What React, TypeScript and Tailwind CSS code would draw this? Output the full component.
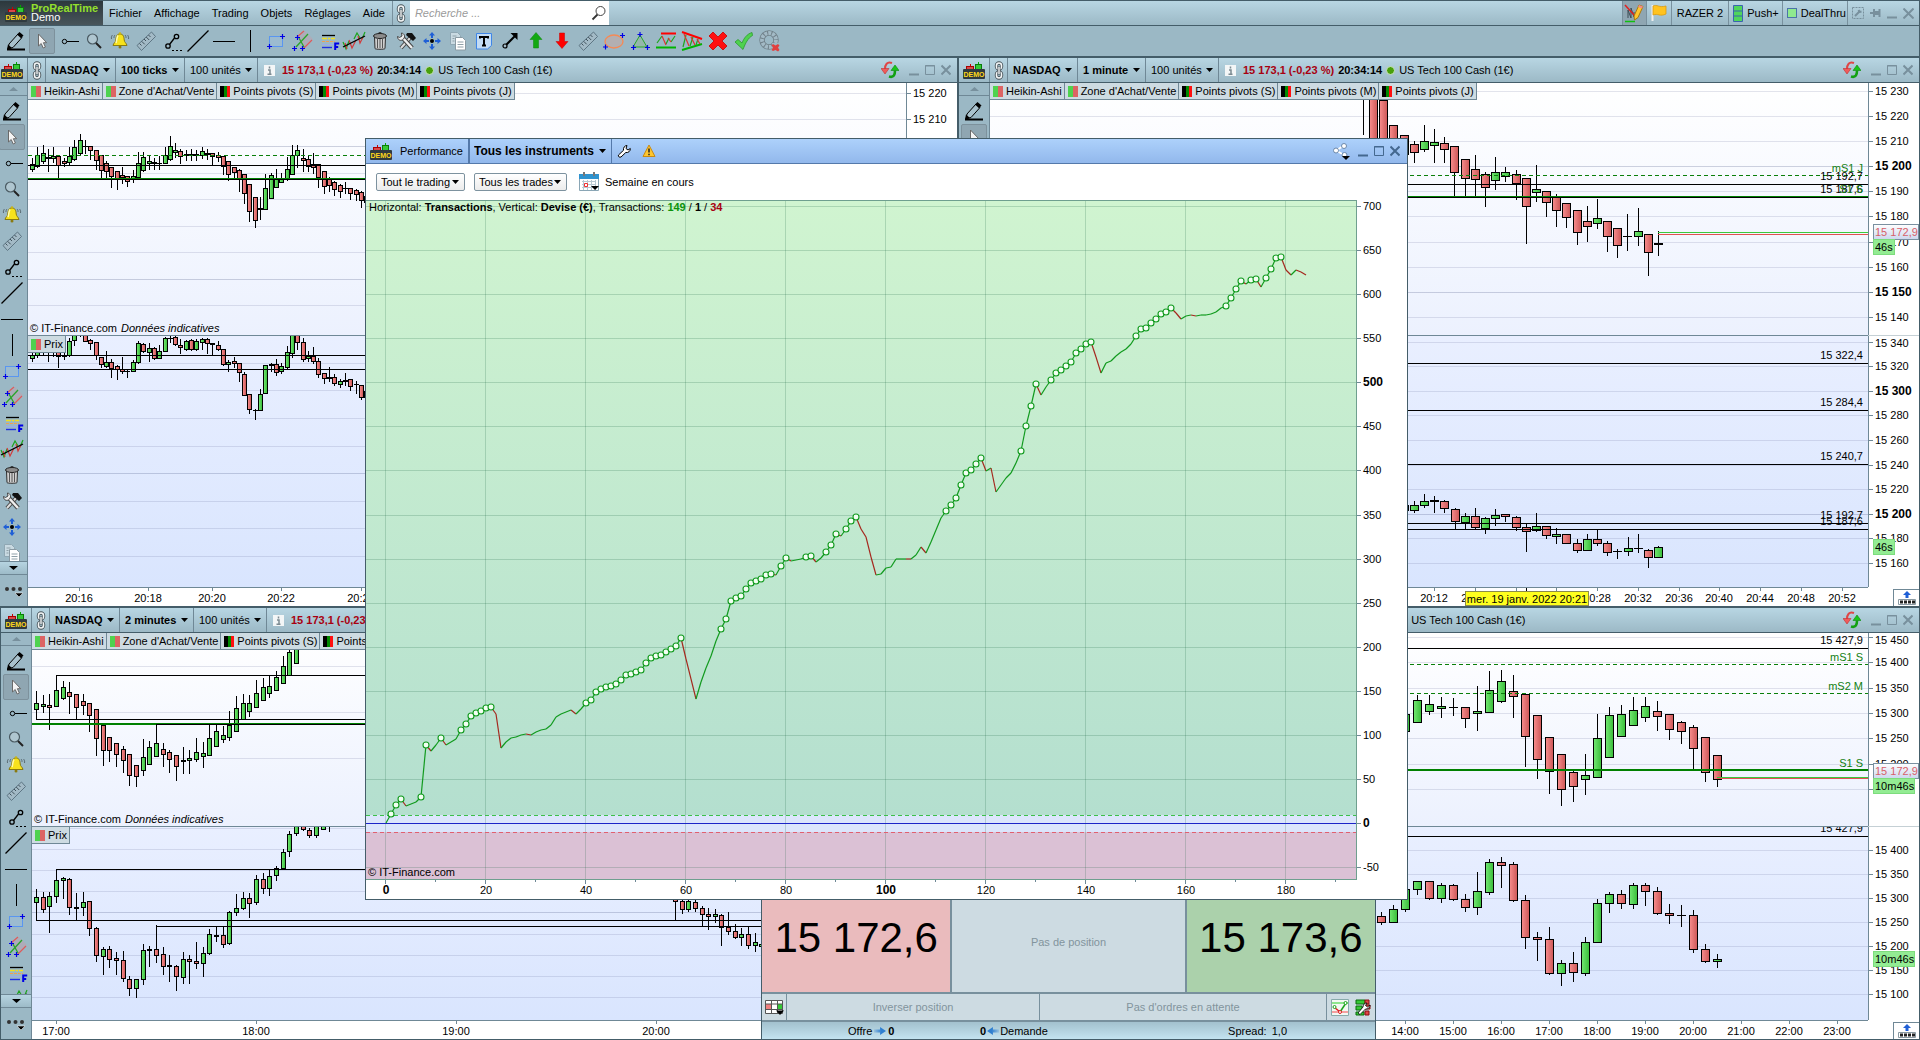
import React from "react";

/* ------------------------------------------------------------------ */
/* Icons                                                               */
/* ------------------------------------------------------------------ */

type IconName =
  | "pencil" | "cursor" | "ray" | "search" | "bell" | "ruler" | "segment" | "diagonal" | "hline" | "vline"
  | "rect" | "channel" | "fibo" | "regression" | "trash" | "tools" | "move" | "copy" | "text" | "arrow"
  | "up" | "down" | "ellipse" | "triangle" | "zigzag" | "wedge" | "cross" | "check" | "donut";

const plus = (x: number, y: number) => <path d={`M${x - 2.5} ${y}h5M${x} ${y - 2.5}v5`} stroke="#0000e6" strokeWidth="1.2" />;

const shapes: Record<IconName, React.ReactNode> = {
  pencil: (
    <>
      <path d="M6 16 15 6l4 3.500-9 10-5 1.500z" fill="#a9c2cd" stroke="#000" strokeWidth="1" />
      <path d="M14 6.500 16.500 4l4 3.500-2.500 2.800z" fill="#000" />
      <path d="M5 16.500 9 20l-5 1.500z" fill="#000" />
      <path d="M4 21.500h18" stroke="#000" strokeWidth="2" />
    </>
  ),
  cursor: <path d="M9.500 6v12l2.700-2.500 2 4.500 2.200-1-2-4.300h3.300z" fill="#f4f4f4" stroke="#6a6a6a" strokeWidth="1" />,
  ray: (
    <>
      <path d="M12 13.500h12" stroke="#000" strokeWidth="1" />
      <circle cx="9.500" cy="13.500" r="2.200" fill="none" stroke="#000" />
    </>
  ),
  search: (
    <>
      <circle cx="11.500" cy="11" r="5" fill="#c3d3db" fillOpacity=".5" stroke="#4a5a62" strokeWidth="1.200" />
      <path d="m15 15 5 5" stroke="#222" strokeWidth="2" />
    </>
  ),
  bell: (
    <>
      <path d="M13 6c-3.500 0-4 3-4.200 6-.2 2.500-2.300 3-2.800 5.500h14c-.5-2.500-2.600-3-2.800-5.500C17 9 16.500 6 13 6z" fill="#f7e21c" stroke="#8a7a10" strokeWidth="1" />
      <path d="M11 7.500c-1.500 2-1 5-2 7.500" stroke="#fffbb0" strokeWidth="1.500" fill="none" />
      <circle cx="13" cy="19" r="1.500" fill="#8a7a10" />
      <circle cx="13" cy="5.500" r="1.200" fill="#c9b414" />
      <path d="M5.500 7c-1 1-1.300 2.500-1 4M8 7c-1 1-1 2-1 3M20.500 7c1 1 1.300 2.500 1 4M18 7c1 1 1 2 1 3" stroke="#5a6a72" strokeWidth="1" fill="none" />
    </>
  ),
  ruler: (
    <>
      <path d="M4 17.500 18.500 4 22.500 8.500 8.500 22.500z" fill="#a3bac6" stroke="#5e7684" strokeWidth="1" />
      <path d="m6.500 15.500 2 2M8.700 13.300l3 3M11 11l2 2M13.200 9l3 3M15.500 7l2 2" stroke="#40525c" strokeWidth="1" />
    </>
  ),
  segment: (
    <>
      <path d="m10.500 16.500 5-6.500" stroke="#000" strokeWidth="1.300" />
      <circle cx="9" cy="18" r="2.200" fill="none" stroke="#000" strokeWidth="1.300" />
      <circle cx="17.500" cy="8.500" r="2.200" fill="none" stroke="#000" strokeWidth="1.300" />
      <path d="M13 22.500h2M17 22.500h2M21 22.500h2" stroke="#000" />
    </>
  ),
  diagonal: <path d="M2.500 23.500 23.500 2.500" stroke="#000" strokeWidth="1.200" />,
  hline: <path d="M2 13.500h22" stroke="#000" strokeWidth="1" />,
  vline: <path d="M13.500 2v22" stroke="#000" strokeWidth="1" />,
  rect: (
    <>
      <rect x="6.500" y="8.500" width="13" height="10" fill="#9fbfe6" fillOpacity=".35" stroke="#5a96f0" />
      {plus(6.5, 18.5)}
      {plus(19.5, 8.5)}
    </>
  ),
  channel: (
    <>
      <path d="M8 10 16 3l8 8-9 8z" fill="#c79aa8" fillOpacity=".4" />
      <path d="M8 9 15 3M14 21l9-9" stroke="#e05a5a" strokeWidth="1.200" />
      <path d="m7 19 12-13M10 10l5 9" stroke="#2aa52a" strokeWidth="1.300" />
      {plus(8.5, 9.5)}
      {plus(5.5, 20.5)}
      {plus(13.5, 20.5)}
    </>
  ),
  fibo: (
    <>
      <path d="M7 7.500h13" stroke="#000" strokeWidth="1.300" />
      <path d="M7 10.500h13" stroke="#f0e020" strokeWidth="1.500" strokeDasharray="5 1 2 1" />
      <path d="M7 13.500h13" stroke="#f0a050" strokeDasharray="3 1" />
      <path d="M7 16.500h11" stroke="#9aa8f0" />
      <path d="M7 19.500h10" stroke="#2030e0" strokeWidth="1.400" />
      <path d="M20.200 22v-6.500h4M20.200 19h3" stroke="#0000e6" strokeWidth="2" fill="none" />
    </>
  ),
  regression: (
    <>
      <path d="m2 14 3 7 3-8M13 11l3-6 3 5M21 11l3-7" stroke="#1da51d" strokeWidth="1.200" fill="none" />
      <path d="m4 15 2 6M8 12l3 8 4-8M17 8l2 7 3-6" stroke="#d23a3a" strokeWidth="1.200" fill="none" />
      <path d="M2 19 24 8" stroke="#000" strokeWidth="1.300" />
    </>
  ),
  trash: (
    <>
      <path d="M7.500 9h11l-.5 11.500c0 1-10 1-10 0z" fill="#cfcfcf" stroke="#2d2d2d" />
      <path d="M10.500 11v9M13 11v9M15.500 11v9" stroke="#555" />
      <ellipse cx="13" cy="8" rx="6.500" ry="2.500" fill="#8c8c8c" stroke="#222" />
      <path d="M11 6c0-2 4-2 4 0" stroke="#222" fill="none" />
    </>
  ),
  tools: (
    <>
      <path d="m8 20 9-10" stroke="#444" strokeWidth="4" />
      <path d="m8 20 9-10" stroke="#ddd" strokeWidth="2" />
      <path d="m14 5 5 0 4 5-3 3-7-6z" fill="#111" />
      <path d="m9 9 10 11" stroke="#444" strokeWidth="4.500" />
      <path d="m9 9 10 11" stroke="#eee" strokeWidth="2.500" />
      <path d="M4.500 8.500c0 4 4 5 6 2.500s1-5.500-2-6l.5 3-2.500 1.500z" fill="#eee" stroke="#444" />
    </>
  ),
  move: (
    <>
      <circle cx="13" cy="13" r="2" fill="#000" />
      <path d="m13 4 3 3.500h-2V10h-2V7.500h-2zM13 22l3-3.500h-2V16h-2v2.500h-2zM4 13l3.500-3v2H10v2H7.500v2zM22 13l-3.500-3v2H16v2h2.500v2z" fill="#1f5fd6" />
    </>
  ),
  copy: (
    <>
      <path d="M5.500 4.500h7l3 3v9h-10z" fill="#c9dae2" stroke="#8fa7b3" />
      <path d="M10.500 9.500h7l3 3v9.500h-10z" fill="#fff" stroke="#8a9aa3" />
      <path d="M12.500 14h6M12.500 16.500h6M12.500 19h6M7.500 8h4M7.500 10.500h2M7.500 13h2" stroke="#8fa0a8" />
    </>
  ),
  text: (
    <>
      <path d="M5.500 5.500h15v12l-4 3.500h-11z" fill="#c3dcf5" stroke="#3f86e8" />
      <path d="M9 10.500V9h8v1.500M13 9v8.500M11 17.500h4" stroke="#000" strokeWidth="2" fill="none" />
    </>
  ),
  arrow: (
    <>
      <path d="m8 18 10-10" stroke="#000" strokeWidth="2" />
      <path d="M20.500 5v7l-7-7z" fill="#000" />
      <circle cx="8" cy="18" r="2" fill="#a3bac6" stroke="#000" strokeWidth="1.200" />
    </>
  ),
  up: <path d="m13 4.500 6 7h-3.500V20h-5v-8.500H7z" fill="#13a813" stroke="#0a8a0a" strokeWidth=".5" />,
  down: <path d="m13 20.500 6-7h-3.500V5h-5v8.500H7z" fill="#f00" stroke="#c40000" strokeWidth=".5" />,
  ellipse: (
    <>
      <ellipse cx="13" cy="13.500" rx="9" ry="6.500" fill="#c3a9a4" fillOpacity=".6" stroke="#f58a55" strokeWidth="1.300" />
      {plus(4.5, 19)}
      {plus(21.5, 7.5)}
    </>
  ),
  triangle: (
    <>
      <path d="m13 7 7 12H6z" fill="#8fb89a" fillOpacity=".6" stroke="#2aa52a" />
      {plus(13, 6.5)}
      {plus(6.5, 19.5)}
      {plus(20.5, 19.5)}
    </>
  ),
  zigzag: (
    <>
      <path d="M8 5.500h15" stroke="#f00" strokeWidth="2" />
      <path d="M3 19.500h20" stroke="#00b400" strokeWidth="2" />
      <path d="m4 15 5-7M13 16l3-6M18 14l4-6" stroke="#1da51d" strokeWidth="1.200" fill="none" />
      <path d="m9 8 4 9M15 10l3 4" stroke="#e03030" strokeWidth="1.200" fill="none" />
    </>
  ),
  wedge: (
    <>
      <path d="m3 4 20 7" stroke="#f00" strokeWidth="2" />
      <path d="M3 22 23 16" stroke="#00b400" strokeWidth="2" />
      <path d="m4 19 3-12M11 18l3-9M17 17l2-6" stroke="#1da51d" strokeWidth="1.200" fill="none" />
      <path d="m5 6 5 12M12 9l4 8M18 11l3 5" stroke="#e03030" strokeWidth="1.200" fill="none" />
    </>
  ),
  cross: <path d="m8 4 5 5 5-5 4 4-5 5 5 5-4 4-5-5-5 5-4-4 5-5-5-5z" fill="#ff1010" stroke="#c00" strokeWidth=".8" />,
  check: <path d="m4 14 3-2.500 4 3.500c2-5 5-9 10-10.500l.5 3C17 10 14.500 15 12 21.500z" fill="#4fd24f" stroke="#2c9a2c" strokeWidth=".8" />,
  donut: (
    <>
      <circle cx="12" cy="12" r="7" fill="none" stroke="#71828b" strokeWidth="5.500" />
      <circle cx="12" cy="12" r="7" fill="none" stroke="#a3bac6" strokeWidth="3.800" strokeDasharray="3 1" />
      <path d="M15 15h9v9h-9z" fill="#9bb8c5" />
      <path d="m16 16 2.500 1.500L21 16l1.500 1.500L21 19.500l1.500 2.500-1.500 1.500-2.500-1.500L16 23l-1.500-1 1.500-2.500-1.500-2z" fill="#e04040" />
    </>
  ),
};

function Icon({ name }: { name: IconName }) {
  return (
    <svg className="block size-[26px]" viewBox="0 0 26 26" fill="none" aria-hidden="true">
      {shapes[name]}
    </svg>
  );
}

function DemoLogo() {
  return (
    <svg className="block h-[17px] w-[22px] shrink-0" viewBox="0 0 22 17" aria-hidden="true">
      <path d="M7.500 2v6" stroke="#c00" />
      <rect x="3.500" y="4.500" width="7" height="3" fill="#d84a4a" stroke="#a00" />
      <path d="M15.500 0v8" stroke="#0a0" />
      <rect x="12.500" y="2.500" width="6" height="6" fill="#35c935" stroke="#0a7a0a" />
      <rect y="7" width="22" height="10" rx="1" fill="#2f3a3f" />
      <text x="11" y="15" textAnchor="middle" fontSize="7" fontWeight="700" fill="#ffd91a" fontFamily="'Liberation Sans', sans-serif">
        DEMO
      </text>
    </svg>
  );
}

function LinkIcon() {
  return (
    <svg className="block h-[19px] w-[10px]" viewBox="0 0 10 19" fill="none" aria-hidden="true">
      <rect x="2.500" y="2" width="5" height="6" rx="2.500" stroke="#4a565c" strokeWidth="3.400" />
      <rect x="2.500" y="11" width="5" height="6" rx="2.500" stroke="#4a565c" strokeWidth="3.400" />
      <rect x="2.500" y="2" width="5" height="6" rx="2.500" stroke="#f4f6f7" strokeWidth="1.600" />
      <rect x="2.500" y="11" width="5" height="6" rx="2.500" stroke="#f4f6f7" strokeWidth="1.600" />
      <path d="M5 5.500v8" stroke="#4a565c" strokeWidth="3" />
      <path d="M5 6v7" stroke="#f4f6f7" strokeWidth="1.400" />
    </svg>
  );
}

function Caret() {
  return (
    <svg className="pointer-events-none absolute top-1/2 right-[5px] h-1 w-[7px] -translate-y-1/2" viewBox="0 0 7 4" aria-hidden="true">
      <path d="M0 0h7L3.500 4z" fill="#000" />
    </svg>
  );
}

function RefreshIcon() {
  return (
    <svg className="block h-[18px] w-[18px]" viewBox="0 0 18 18" fill="none" aria-hidden="true">
      <path d="M11 2C6 0 4 4 4 8" stroke="#e04545" strokeWidth="2" />
      <path d="M0 7.500h8l-4 5.500z" fill="#f05a5a" stroke="#c23030" strokeWidth=".6" />
      <path d="M8 15.500c5 1.500 6-2 6-6" stroke="#12a012" strokeWidth="2.600" />
      <path d="M10 9.500h8L14 4z" fill="#19c419" stroke="#0c8a0c" strokeWidth=".6" />
    </svg>
  );
}

function WindowButtons({ tone }: { tone: "grey" | "blue" }) {
  const color = tone === "grey" ? "text-[#78909d]" : "text-[#44688f]";
  return (
    <div className={`flex items-center gap-[6px] ${color}`}>
      <button aria-label="Réduire" className="h-3 w-[10px]">
        <svg viewBox="0 0 10 12" className="block h-3 w-[10px]"><path d="M0 10.500h10" stroke="currentColor" strokeWidth="2" /></svg>
      </button>
      <button aria-label="Agrandir" className="h-3 w-[10px]">
        <svg viewBox="0 0 10 12" className="block h-3 w-[10px]"><path d="M.5 1.500h9v9h-9zM0 2h10" stroke="currentColor" fill="none" /></svg>
      </button>
      <button aria-label="Fermer" className="h-3 w-[10px]">
        <svg viewBox="0 0 10 12" className="block h-3 w-[10px]"><path d="m.5 1.500 9 9m0-9-9 9" stroke="currentColor" strokeWidth="2" /></svg>
      </button>
    </div>
  );
}

/* ------------------------------------------------------------------ */
/* Chart primitives                                                    */
/* ------------------------------------------------------------------ */

/** high, top of body, bottom of body, low, 1 = rising */
type Bar = [number, number, number, number, 0 | 1];
type Level = { y: number; kind?: "black" | "green" | "dash" | "thick"; from?: number; up?: number; down?: number };
type Note = { text: string; y: number; green?: boolean };
type Tick = { at: number; label: string; bold?: boolean };

type Series = { start: number; step: number; half: number; bars: Bar[] };

function Candles({ start, step, half, bars }: Series) {
  return (
    <g shapeRendering="crispEdges">
      {bars.map(([high, top, bottom, low, rising], i) => {
        const x = Math.floor(start + i * step);
        const height = Math.max(bottom - top + 1, 1);
        return (
          <g key={i}>
            <rect x={x} y={high} width={1} height={low - high + 1} fill="#000" />
            <rect x={x - half} y={top} width={half * 2 + 1} height={height} fill="#000" />
            {height > 2 && (
              <rect x={x - half + 1} y={top + 1} width={half * 2 - 1} height={height - 2} fill={rising ? "url(#rise)" : "url(#fall)"} />
            )}
          </g>
        );
      })}
    </g>
  );
}

type PaneProps = {
  ox: number;
  oy: number;
  grid: number[];
  strong?: number[];
  levels?: Level[];
  notes?: Note[];
  noteX?: number;
  series: Series[];
  quote?: { x: number; green: number; red: number };
};

const FAR = 4000;

function Pane({ ox, oy, grid, strong = [], levels = [], notes = [], noteX = 0, series, quote }: PaneProps) {
  return (
    <svg className="absolute inset-0 block h-full w-full text-[11px]" aria-hidden="true">
      <g transform={`translate(${-ox} ${-oy})`}>
        <g shapeRendering="crispEdges">
          {grid.map((y) => (
            <rect key={y} x={ox} y={y} width={FAR} height={1} fill="#56608c" opacity={strong.includes(y) ? 0.28 : 0.17} />
          ))}
        </g>
        {series.map((s, i) => (
          <Candles key={i} {...s} />
        ))}
        <g shapeRendering="crispEdges">
          {levels.map((l, i) => {
            const from = l.from ?? ox;
            const green = l.kind && l.kind !== "black";
            return (
              <g key={i}>
                {l.kind === "dash" ? (
                  <path d={`M${from} ${l.y + 0.5}h${FAR}`} stroke="#0a7f0a" strokeDasharray="4 3" />
                ) : (
                  <rect x={from} y={l.y} width={FAR} height={l.kind === "thick" ? 2 : 1} fill={green ? "#008000" : "#000"} />
                )}
                {l.up ? <rect x={from} y={l.y - l.up} width={1} height={l.up} /> : null}
                {l.down ? <rect x={from} y={l.y} width={1} height={l.down} /> : null}
              </g>
            );
          })}
          {quote && (
            <>
              <rect x={quote.x} y={quote.green} width={FAR} height={1} fill="#3cc83c" />
              <rect x={quote.x} y={quote.red} width={FAR} height={1} fill="#e05050" />
            </>
          )}
        </g>
        {notes.map((n, i) => (
          <text key={i} x={noteX} y={n.y} textAnchor="end" fill={n.green ? "#128012" : "#000"}>
            {n.text}
          </text>
        ))}
      </g>
    </svg>
  );
}

type Tag = { y: number; text: string; kind: "price" | "timer"; width: number };

function PriceAxis({ oy, ticks, tags = [] }: { oy: number; ticks: Tick[]; tags?: Tag[] }) {
  return (
    <svg className="block h-full w-[51px] shrink-0 border-l border-[#6f8896] bg-white text-[11px]">
      <g transform={`translate(0 ${-oy})`}>
        {ticks.map((t) => (
          <g key={t.label}>
            <rect x={0} y={t.at} width={4} height={1} fill="#6f8896" />
            <text x={6} y={Math.max(t.at + 4, oy + 11)} fontWeight={t.bold ? 700 : 400} fontSize={t.bold ? 12 : 11}>
              {t.label}
            </text>
          </g>
        ))}
        {tags.map((t) => (
          <g key={t.text}>
            <rect x={4.5} y={t.y + 0.5} width={t.width} height={15} fill={t.kind === "price" ? "url(#quote)" : "#93ec93"} stroke={t.kind === "price" ? "#7a90a0" : "#7ddc7d"} />
            <text x={6} y={t.y + 12} fill={t.kind === "price" ? "#d75f68" : "#000"}>
              {t.text}
            </text>
          </g>
        ))}
      </g>
    </svg>
  );
}

function TimeAxis({ ox, ticks, corner, cursor }: { ox: number; ticks: Tick[]; corner?: boolean; cursor?: string }) {
  return (
    <div className="flex h-[19px] shrink-0 bg-white">
      <div className="relative min-w-0 flex-1 border-t border-[#6f8896]">
        <svg className="block h-full w-full text-[11px]">
          <g transform={`translate(${-ox} 0)`}>
            {ticks.map((t) => (
              <g key={t.at}>
                <rect x={t.at} y={0} width={1} height={3} fill="#6f8896" />
                {t.label && <text x={t.at} y={14} textAnchor="middle">{t.label}</text>}
              </g>
            ))}
            {cursor && <rect x={1526} y={0} width={1} height={3} fill="#000" />}
          </g>
        </svg>
        {cursor && (
          <div className="absolute top-[3px] left-[475px] h-[15px] w-[124px] overflow-hidden border border-[#8b8b4a] bg-[#ffff1e] text-center leading-[14px] whitespace-nowrap">
            {cursor}
          </div>
        )}
      </div>
      <div className="flex w-[51px] shrink-0 items-end justify-end">
        {corner && (
          <button aria-label="Clavier" className="flex h-[17px] w-[26px] items-center justify-center border-t border-l border-[#6f8896] bg-white">
            <svg viewBox="0 0 20 16" className="block h-4 w-5">
              <path d="M10 1l4 4h-2.500v3h-3V5H6z" fill="#1f5fd6" />
              <path d="M1.500 9.500h17v5h-17z" fill="#fff" stroke="#8a9aa3" />
              <path d="M3 12h3M7 12h3M11 12h3M15 12h3" stroke="#222" strokeWidth="3" />
            </svg>
          </button>
        )}
      </div>
    </div>
  );
}

/* ------------------------------------------------------------------ */
/* Series                                                              */
/* ------------------------------------------------------------------ */

const tickUpper: Bar[] = [
  [158, 164, 169, 171, 1], [147, 155, 166, 167, 1], [145, 153, 161, 163, 1], [149, 157, 158, 171, 0], [147, 156, 158, 162, 1],
  [156, 156, 165, 177, 0], [158, 161, 163, 166, 0], [147, 156, 162, 165, 1], [140, 147, 159, 160, 1], [134, 140, 153, 154, 1],
  [140, 146, 146, 153, 1], [146, 146, 150, 159, 0], [150, 150, 160, 169, 0], [155, 155, 170, 178, 0], [161, 163, 171, 177, 0],
  [167, 167, 176, 187, 0], [171, 171, 179, 189, 0], [167, 175, 177, 183, 0], [176, 176, 181, 186, 0], [170, 176, 178, 182, 1],
  [152, 163, 177, 178, 1], [152, 157, 170, 171, 1], [155, 161, 163, 169, 1], [158, 162, 163, 169, 0], [156, 163, 163, 169, 0],
  [147, 155, 163, 163, 1], [136, 146, 159, 160, 1], [143, 150, 152, 157, 1], [149, 151, 156, 163, 0], [150, 154, 155, 160, 0],
  [149, 154, 155, 160, 0], [150, 154, 155, 160, 0], [147, 151, 155, 158, 1], [149, 153, 154, 159, 0], [153, 153, 156, 164, 0],
  [152, 155, 157, 161, 0], [156, 156, 166, 174, 0], [161, 161, 174, 180, 0], [167, 167, 172, 177, 0], [169, 170, 179, 191, 0],
  [174, 174, 193, 203, 0], [184, 184, 211, 221, 0], [197, 197, 220, 227, 0], [197, 208, 209, 219, 0], [174, 188, 209, 209, 1],
  [173, 175, 198, 198, 1], [169, 178, 187, 187, 1], [173, 179, 182, 182, 1], [157, 169, 179, 180, 1], [145, 155, 174, 174, 1],
  [145, 150, 155, 167, 1], [149, 158, 160, 171, 0], [156, 159, 166, 171, 0], [153, 164, 167, 173, 0], [164, 164, 177, 187, 0],
  [171, 171, 186, 193, 0], [177, 179, 185, 191, 0], [181, 182, 189, 195, 0], [184, 185, 191, 197, 0], [182, 188, 188, 193, 0],
  [188, 188, 193, 199, 0], [189, 190, 194, 200, 0], [191, 192, 200, 207, 0], [196, 196, 202, 207, 0],
];

const tickLower: Bar[] = [
  [353, 355, 358, 361, 1], [340, 347, 355, 357, 1], [340, 345, 352, 354, 1], [345, 350, 352, 361, 0], [345, 350, 352, 356, 1],
  [346, 349, 356, 367, 0], [350, 355, 356, 359, 0], [338, 341, 355, 356, 1], [330, 333, 340, 345, 1], [330, 330, 334, 336, 1],
  [333, 334, 341, 341, 0], [339, 340, 343, 349, 0], [342, 342, 355, 359, 0], [357, 357, 364, 367, 0], [351, 362, 366, 367, 1],
  [359, 362, 368, 377, 0], [365, 366, 369, 379, 0], [357, 369, 371, 373, 0], [370, 371, 371, 377, 0], [360, 362, 371, 371, 1],
  [341, 343, 362, 363, 1], [343, 344, 351, 352, 0], [343, 348, 352, 361, 1], [347, 348, 358, 359, 0], [345, 351, 358, 358, 1],
  [337, 338, 351, 351, 1], [336, 338, 338, 342, 0], [336, 337, 344, 345, 0], [339, 345, 347, 353, 0], [340, 341, 349, 350, 1],
  [339, 340, 349, 350, 0], [339, 341, 349, 350, 1], [338, 339, 342, 349, 1], [338, 339, 343, 353, 0], [343, 343, 344, 355, 0],
  [341, 345, 349, 350, 0], [349, 349, 364, 365, 0], [360, 362, 364, 371, 1], [357, 361, 363, 367, 0], [363, 363, 372, 381, 0],
  [372, 374, 395, 395, 0], [394, 394, 409, 413, 0], [409, 410, 410, 419, 0], [389, 394, 410, 410, 1], [365, 365, 393, 393, 1],
  [363, 364, 365, 371, 0], [359, 364, 372, 375, 0], [363, 366, 371, 373, 1], [346, 352, 367, 368, 1], [332, 334, 353, 357, 1],
  [332, 334, 342, 349, 0], [338, 342, 359, 361, 0], [351, 356, 358, 361, 1], [347, 356, 361, 363, 0], [358, 361, 374, 377, 0],
  [373, 373, 378, 383, 0], [367, 377, 378, 381, 0], [374, 377, 383, 385, 0], [379, 381, 384, 387, 1], [373, 380, 381, 385, 0],
  [379, 379, 386, 390, 0], [381, 384, 384, 393, 0], [385, 385, 397, 399, 0], [391, 391, 397, 399, 0],
];

const minuteUpper: Bar[] = [
  [80, 80, 90, 134, 0], [80, 85, 160, 160, 0], [100, 100, 160, 160, 0], [125, 125, 160, 160, 0], [135, 135, 154, 154, 0],
  [141, 144, 152, 162, 0], [125, 141, 149, 151, 1], [129, 142, 145, 162, 1], [137, 143, 149, 162, 0], [146, 146, 172, 196, 0],
  [159, 159, 178, 196, 0], [155, 169, 179, 196, 0], [172, 174, 187, 206, 0], [157, 172, 180, 189, 1], [167, 172, 176, 181, 1],
  [170, 174, 183, 199, 0], [178, 178, 206, 243, 0], [165, 189, 192, 201, 1], [191, 191, 202, 216, 0], [194, 197, 210, 226, 0],
  [203, 203, 217, 227, 0], [210, 210, 232, 244, 0], [206, 221, 226, 241, 0], [199, 218, 223, 228, 1], [221, 221, 236, 251, 0],
  [228, 228, 245, 257, 0], [214, 236, 236, 250, 0], [208, 231, 236, 245, 1], [234, 234, 252, 275, 0], [231, 243, 244, 255, 0],
];

const minuteLower: Bar[] = [
  [505, 505, 510, 511, 1], [501, 505, 510, 512, 1], [494, 501, 505, 507, 1], [496, 500, 501, 512, 0], [500, 501, 508, 512, 0],
  [508, 509, 521, 528, 0], [513, 516, 522, 528, 1], [508, 516, 527, 528, 0], [517, 518, 528, 533, 1], [509, 515, 518, 525, 1],
  [514, 514, 516, 521, 0], [516, 517, 527, 530, 0], [523, 527, 531, 551, 0], [513, 526, 530, 531, 1], [526, 526, 535, 538, 0],
  [528, 534, 536, 543, 1], [534, 534, 543, 543, 0], [539, 543, 550, 552, 0], [534, 539, 550, 550, 1], [529, 539, 543, 545, 0],
  [541, 543, 552, 555, 0], [549, 551, 551, 558, 0], [537, 548, 551, 555, 1], [534, 548, 548, 552, 0], [549, 550, 557, 567, 0],
  [546, 547, 557, 557, 1],
];

const twoMinUpper: Bar[] = [
  [691, 703, 709, 719, 1], [695, 704, 706, 712, 1], [694, 705, 707, 729, 0], [675, 690, 706, 706, 1], [681, 687, 698, 699, 1],
  [682, 692, 696, 713, 0], [694, 694, 707, 719, 0], [694, 701, 705, 714, 0], [703, 703, 715, 731, 0], [709, 709, 738, 755, 0],
  [725, 725, 750, 765, 0], [737, 737, 750, 761, 0], [743, 743, 754, 766, 0], [746, 749, 760, 772, 0], [754, 754, 775, 785, 0],
  [765, 765, 776, 786, 0], [739, 757, 770, 775, 1], [741, 747, 764, 764, 1], [724, 743, 756, 756, 1], [743, 749, 754, 766, 0],
  [750, 752, 759, 772, 0], [755, 755, 766, 780, 0], [747, 760, 761, 773, 0], [750, 758, 760, 773, 1], [738, 752, 759, 761, 1],
  [742, 753, 756, 767, 1], [725, 738, 755, 755, 1], [724, 731, 746, 746, 1], [726, 735, 739, 742, 1], [711, 725, 737, 740, 1],
  [696, 708, 731, 731, 1], [694, 703, 719, 719, 1], [695, 703, 711, 716, 1], [680, 693, 707, 707, 1], [678, 687, 700, 700, 1],
  [675, 686, 693, 697, 1], [671, 677, 690, 690, 1], [656, 666, 683, 683, 1], [648, 652, 675, 675, 1], [640, 640, 663, 663, 1],
];

const twoMinLower: Bar[] = [
  [889, 897, 902, 920, 1], [892, 897, 909, 912, 0], [892, 896, 906, 932, 1], [869, 880, 896, 902, 1], [877, 878, 880, 898, 1],
  [878, 879, 907, 914, 0], [893, 907, 908, 920, 0], [892, 902, 907, 915, 1], [901, 901, 928, 935, 0], [927, 928, 955, 961, 0],
  [947, 949, 956, 974, 1], [946, 949, 959, 967, 0], [952, 958, 960, 974, 0], [951, 960, 978, 981, 0], [976, 979, 988, 995, 0],
  [979, 979, 988, 997, 1], [944, 950, 979, 984, 1], [946, 949, 950, 966, 0], [925, 949, 955, 962, 0], [947, 954, 966, 974, 0],
  [955, 965, 966, 981, 0], [965, 966, 976, 990, 0], [952, 959, 977, 983, 1], [955, 959, 961, 983, 0], [942, 961, 963, 968, 0],
  [947, 953, 963, 976, 1], [929, 934, 953, 954, 1], [927, 935, 936, 941, 0], [927, 935, 944, 947, 0], [911, 912, 943, 944, 1],
  [894, 908, 912, 915, 1], [892, 898, 908, 909, 1], [893, 898, 903, 917, 0], [875, 879, 902, 904, 1], [873, 879, 888, 893, 0],
  [870, 876, 888, 895, 1], [866, 868, 875, 880, 1], [849, 852, 868, 868, 1], [831, 834, 851, 856, 1], [820, 820, 833, 835, 1],
  [820, 820, 829, 830, 0], [828, 830, 835, 837, 0], [822, 824, 835, 837, 1], [820, 820, 829, 829, 1], [820, 822, 825, 831, 0],
];

const twoMinTail: Bar[] = [
  [890, 895, 901, 919, 0], [895, 901, 909, 913, 0], [895, 901, 909, 911, 1], [900, 902, 908, 911, 0], [906, 908, 914, 926, 0],
  [908, 914, 916, 929, 0], [909, 914, 916, 922, 1], [914, 915, 927, 945, 0], [912, 927, 931, 934, 0], [924, 931, 937, 938, 0],
  [928, 934, 937, 945, 1], [926, 934, 945, 948, 0], [933, 942, 945, 951, 1], [942, 944, 946, 950, 1],
];

const quarterUpper: Bar[] = [
  [714, 714, 731, 731, 1], [695, 700, 722, 722, 1], [695, 704, 711, 714, 1], [697, 706, 708, 717, 1], [698, 707, 707, 715, 0],
  [707, 707, 718, 727, 0], [686, 711, 713, 730, 1], [671, 690, 712, 712, 1], [670, 681, 701, 702, 1], [675, 691, 696, 717, 0],
  [694, 694, 736, 766, 0], [715, 715, 759, 778, 0], [737, 737, 771, 793, 0], [754, 754, 789, 805, 0], [770, 772, 786, 801, 0],
  [754, 775, 779, 794, 1], [714, 738, 777, 777, 1], [707, 715, 757, 757, 1], [705, 714, 736, 736, 1], [697, 710, 725, 725, 1],
  [697, 706, 717, 721, 1], [701, 711, 716, 730, 0], [714, 714, 729, 739, 0], [721, 722, 731, 743, 0], [725, 727, 748, 769, 0],
  [737, 737, 772, 781, 0], [755, 755, 779, 786, 0],
];

const quarterLower: Bar[] = [
  [912, 916, 922, 924, 0], [905, 909, 922, 922, 1], [889, 889, 909, 911, 1], [881, 881, 889, 894, 1], [881, 881, 898, 899, 0],
  [883, 885, 898, 902, 1], [884, 885, 899, 900, 0], [894, 899, 907, 911, 0], [872, 891, 907, 914, 1], [859, 862, 892, 894, 1],
  [857, 862, 865, 887, 0], [862, 864, 900, 901, 0], [895, 900, 937, 948, 0], [932, 937, 939, 960, 0], [927, 939, 973, 974, 0],
  [960, 963, 973, 985, 1], [952, 963, 972, 981, 0], [937, 942, 973, 975, 1], [899, 903, 942, 942, 1], [892, 894, 903, 912, 1],
  [890, 894, 903, 908, 0], [883, 885, 904, 908, 1], [883, 885, 891, 905, 0], [887, 891, 913, 914, 0], [904, 913, 915, 923, 0],
  [905, 915, 915, 926, 0], [910, 915, 949, 952, 0], [944, 949, 961, 962, 0], [954, 959, 961, 967, 1],
];

/** Cumulated gain after each transaction, in euros. */
const equity = [
  0, 10, 20, 27, 19, 22, 24, 30, 89, 82, 89, 97, 89, 92, 95, 105, 112, 121, 125, 127, 130, 132, 124, 85, 92, 96, 98, 100, 101, 100,
  103, 105, 107, 111, 120, 124, 126, 128, 124, 129, 136, 139, 149, 152, 154, 155, 158, 162, 168, 169, 171, 174, 181, 187, 189, 191,
  194, 197, 201, 210, 186, 163, 141, 160, 176, 190, 206, 220, 232, 252, 255, 258, 265, 272, 275, 277, 281, 283, 281, 292, 301, 297,
  298, 300, 302, 303, 296, 301, 308, 315, 328, 326, 333, 343, 347, 334, 324, 302, 281, 283, 289, 291, 299, 300, 300, 299, 304, 313,
  306, 319, 332, 346, 354, 361, 369, 384, 397, 401, 407, 414, 399, 403, 376, 384, 391, 397, 408, 422, 450, 473, 498, 486, 495, 503,
  511, 514, 518, 523, 533, 538, 544, 546, 529, 511, 522, 524, 530, 534, 538, 544, 553, 560, 562, 567, 572, 578, 580, 584, 579, 572,
  575, 576, 575, 576, 576, 578, 580, 584, 586, 596, 606, 615, 612, 616, 617, 608, 618, 629, 641, 642, 627, 622, 627, 625, 622,
];

/* ------------------------------------------------------------------ */
/* Chart windows                                                       */
/* ------------------------------------------------------------------ */

const tools: IconName[] = [
  "pencil", "cursor", "ray", "search", "bell", "ruler", "segment", "diagonal", "hline", "vline", "rect", "channel", "fibo",
  "regression", "trash", "tools", "move", "copy",
];
const moreTools: IconName[] = ["text", "arrow", "up", "down", "ruler", "ellipse", "triangle", "zigzag", "wedge", "cross", "check", "donut"];

function ToolButton({ name }: { name: IconName }) {
  return (
    <button
      aria-label={name}
      className={
        name === "cursor"
          ? "size-[26px] shrink-0 rounded-[2px] border border-[#7d919c] bg-[#8fa6b2] *:-m-px"
          : "size-[26px] shrink-0"
      }
    >
      <Icon name={name} />
    </button>
  );
}

function Sidebar({ narrow }: { narrow?: boolean }) {
  return (
    <div
      className={
        narrow
          ? "flex w-7 shrink-0 flex-col border-r border-[#6f8896] bg-[#9bb8c5]"
          : "flex w-[31px] shrink-0 flex-col border-r border-[#6f8896] bg-[#9bb8c5]"
      }
    >
      <button aria-label="Défiler vers le haut" className="flex h-[13px] shrink-0 items-center justify-center border-b border-[#6f8896]">
        <svg viewBox="0 0 9 4" className="h-1 w-[9px]"><path d="M0 4h9L4.500 0z" fill="#78909d" /></svg>
      </button>
      <div className={narrow ? "flex min-h-0 flex-1 flex-col items-center overflow-hidden pt-[2px] pr-[3px]" : "flex min-h-0 flex-1 flex-col items-center overflow-hidden pt-[2px]"}>
        {tools.map((t) => (
          <ToolButton key={t} name={t} />
        ))}
      </div>
      <button aria-label="Défiler vers le bas" className="flex h-[14px] shrink-0 items-center justify-center border-y border-[#6f8896] bg-linear-to-b from-[#b6d4e1] to-[#9dbbc8]">
        <svg viewBox="0 0 9 4" className="h-1 w-[9px]"><path d="M0 0h9L4.500 4z" fill="#000" /></svg>
      </button>
      <button aria-label="Plus d'outils" className="flex h-[31px] shrink-0 items-center justify-center">
        <svg viewBox="0 0 20 12" className="h-3 w-5">
          <circle cx="3" cy="4" r="2" fill="#333" /><circle cx="9.500" cy="4" r="2" fill="#333" /><circle cx="16" cy="4" r="2" fill="#333" />
          <path d="M11 8h8l-4 4z" fill="#000" stroke="#fff" strokeWidth=".5" />
        </svg>
      </button>
    </div>
  );
}

function HeaderSelect({ label, value, bold }: { label: string; value: string; bold?: boolean }) {
  return (
    <label className="relative flex h-full shrink-0 items-center border-r border-[#6f8896]">
      <select
        aria-label={label}
        className={bold ? "h-full appearance-none bg-transparent pr-4 pl-[5px] font-bold outline-none" : "h-full appearance-none bg-transparent pr-4 pl-[5px] outline-none"}
      >
        <option>{value}</option>
      </select>
      <Caret />
    </label>
  );
}

function ChartHeader({ period, narrow }: { period: string; narrow?: boolean }) {
  return (
    <header className="flex h-[25px] shrink-0 items-center border-b border-[#445d69] bg-linear-to-b from-[#b8d6e3] to-[#9cb9c6] whitespace-nowrap">
      <div className={narrow ? "flex h-full w-7 shrink-0 items-center justify-center border-r border-[#6f8896] pr-[3px]" : "flex h-full w-[31px] shrink-0 items-center justify-center border-r border-[#6f8896]"}>
        <DemoLogo />
      </div>
      <button aria-label="Lier les fenêtres" className="flex h-full w-[18px] shrink-0 items-center justify-center border-r border-[#6f8896]">
        <LinkIcon />
      </button>
      <HeaderSelect label="Instrument" value="NASDAQ" bold />
      <HeaderSelect label="Période" value={period} bold />
      <HeaderSelect label="Unités affichées" value="100 unités" />
      <div className="flex min-w-0 flex-1 items-center overflow-hidden pl-[6px]">
        <svg viewBox="0 0 11 11" className="size-[11px] shrink-0">
          <path d="M0 0h11v11H0z" fill="#f3f6f7" />
          <path d="M5.500 1.500v2M4 5h2v4M3.500 9.200h4" stroke="#7c8a91" strokeWidth="1.500" fill="none" />
        </svg>
        <b className="ml-[7px] text-[#a80010]">15 173,1 (-0,23 %)</b>
        <b className="ml-1">20:34:14</b>
        <i className="mx-1 size-[9px] shrink-0 rounded-full border border-[#cfe3c8] bg-[#48a00a]" />
        <span>US Tech 100 Cash (1€)</span>
      </div>
      <div className="flex items-center gap-[10px] pr-[6px]">
        <button aria-label="Actualiser"><RefreshIcon /></button>
        <WindowButtons tone="grey" />
      </div>
    </header>
  );
}

function LegendItem({ name, pivot }: { name: string; pivot?: boolean }) {
  return (
    <button className="flex h-full items-center gap-[3px] border-r border-b border-[#6f8896] bg-[#cddbe2] pr-[2px] pl-[3px] whitespace-nowrap">
      <span className="flex h-[11px] w-[10px]">
        {pivot ? (
          <>
            <i className="flex-1 bg-black" />
            <i className="flex-1 bg-[#008a00]" />
            <i className="flex-1 bg-[#ff1010]" />
          </>
        ) : (
          <>
            <i className="flex-1 bg-[#4fd24f]" />
            <i className="flex-1 bg-[#dc6464]" />
          </>
        )}
      </span>
      {name}
    </button>
  );
}

function Legend() {
  return (
    <div className="absolute top-0 left-0 flex h-[17px]">
      <LegendItem name="Heikin-Ashi" />
      <LegendItem name="Zone d'Achat/Vente" />
      <LegendItem name="Points pivots (S)" pivot />
      <LegendItem name="Points pivots (M)" pivot />
      <LegendItem name="Points pivots (J)" pivot />
    </div>
  );
}

type ChartWindowProps = {
  period: string;
  narrow?: boolean;
  legend?: boolean;
  frame: string;
  upper: PaneProps;
  lower: PaneProps;
  upperTicks: Tick[];
  lowerTicks: Tick[];
  upperTags?: Tag[];
  lowerTags?: Tag[];
  times: Tick[];
  corner?: boolean;
  cursor?: string;
  split: string;
};

function ChartWindow(p: ChartWindowProps) {
  return (
    <section className={`flex min-h-0 min-w-0 flex-col overflow-hidden border-[#445d69] ${p.frame}`}>
      <ChartHeader period={p.period} narrow={p.narrow} />
      <div className="flex min-h-0 flex-1">
        <Sidebar narrow={p.narrow} />
        <div className="flex min-w-0 flex-1 flex-col">
          <div className={`grid min-h-0 flex-1 ${p.split}`}>
            <div className="flex min-h-0">
              <div className="relative min-w-0 flex-1 overflow-hidden bg-linear-to-b from-white to-[#ecf1fe]">
                <Pane {...p.upper} />
                {p.legend && (
                  <>
                    <Legend />
                    <p className="absolute bottom-0 left-[2px] leading-[13px]">
                      © IT-Finance.com <em className="ml-px">Données indicatives</em>
                    </p>
                  </>
                )}
              </div>
              <PriceAxis oy={p.upper.oy} ticks={p.upperTicks} tags={p.upperTags} />
            </div>
            <div className="flex min-h-0">
              <div className="relative min-w-0 flex-1 overflow-hidden border-t border-[#6f8896] bg-linear-to-b from-[#e9efff] to-[#d9e5fe]">
                <Pane {...p.lower} />
                {p.legend && (
                  <div className="absolute top-0 left-0 flex h-[17px]">
                    <LegendItem name="Prix" />
                  </div>
                )}
              </div>
              <div className="border-t border-[#c5d0d5]">
                <PriceAxis oy={p.lower.oy} ticks={p.lowerTicks} tags={p.lowerTags} />
              </div>
            </div>
          </div>
          <TimeAxis ox={p.upper.ox} ticks={p.times} corner={p.corner} cursor={p.cursor} />
        </div>
      </div>
    </section>
  );
}

/* ------------------------------------------------------------------ */
/* Performance window                                                  */
/* ------------------------------------------------------------------ */

const gainX = (n: number) => 20 + n * 5;
const gainY = (v: number) => Math.round(622 - v * 0.8814);
const gainTicks = [700, 650, 600, 550, 500, 450, 400, 350, 300, 250, 200, 150, 100, 50, 0, -50];
const tradeTicks = [0, 20, 40, 60, 80, 100, 120, 140, 160, 180];

function EquityPlot() {
  let best = 0;
  const records = equity.map((v) => {
    const record = v > best;
    best = Math.max(best, v);
    return record;
  });
  return (
    <svg className="block h-full w-full">
      <rect width="100%" height={614} fill="url(#gain)" />
      <rect y={614} width="100%" height={17} fill="#dce6fc" />
      <rect y={631} width="100%" height={200} fill="#dbc1d5" />
      <g shapeRendering="crispEdges">
        {gainTicks.map((v) => (
          <rect key={v} y={gainY(v)} width="100%" height={1} fill="#14603c" opacity={0.2} />
        ))}
        {tradeTicks.map((n) => (
          <rect key={n} x={gainX(n) - 1} width={1} height="100%" fill="#14603c" opacity={0.2} />
        ))}
        <path d={`M0 614.5h${FAR}`} stroke="#3cc04a" strokeDasharray="4 3" />
        <path d={`M0 631.5h${FAR}`} stroke="#e06070" strokeDasharray="4 3" />
        <rect y={622} width="100%" height={1} fill="#1c24c8" />
      </g>
      {equity.slice(1).map((v, i) => (
        <line
          key={i}
          x1={gainX(i)}
          y1={gainY(equity[i])}
          x2={gainX(i + 1)}
          y2={gainY(v)}
          stroke={v >= equity[i] ? "#119a1e" : "#a5281e"}
          strokeWidth={1.2}
        />
      ))}
      {equity.map((v, i) => (records[i] ? <circle key={i} cx={gainX(i)} cy={gainY(v)} r={3} fill="#f3fff3" stroke="#119a1e" strokeWidth={1.1} /> : null))}
    </svg>
  );
}

function FilterSelect({ label, value }: { label: string; value: string }) {
  return (
    <label className="relative flex h-[18px] items-center rounded-[2px] border border-[#7d929f] bg-linear-to-b from-white to-[#ececec]">
      <select aria-label={label} className="h-full appearance-none bg-transparent pr-[13px] pl-1 outline-none">
        <option>{value}</option>
      </select>
      <Caret />
    </label>
  );
}

function PerformanceWindow() {
  return (
    <section className="absolute top-[138px] left-[365px] z-20 flex h-[762px] w-[1043px] flex-col border border-[#445d69] bg-white">
      <header className="flex h-[25px] shrink-0 items-center border-b border-[#5479aa] bg-linear-to-b from-[#add1fb] to-[#92b8ec]">
        <div className="flex h-full w-[104px] items-center justify-between border-r-2 border-[#5479aa] pr-1 pl-1">
          <DemoLogo />
          <h2 className="pr-px">Performance</h2>
        </div>
        <label className="relative flex h-full items-center border-r border-[#5479aa]">
          <select aria-label="Instruments" className="h-full appearance-none bg-transparent pr-[17px] pl-1 text-[12px] font-bold outline-none">
            <option>Tous les instruments</option>
          </select>
          <Caret />
        </label>
        <button aria-label="Réglages" className="ml-[5px]">
          <svg viewBox="0 0 14 14" className="block size-[14px]">
            <path d="M1.500 11 6.500 6.300C6 4 7.500 1.500 10 1.500L9 4.500l2 1.500 2.300-1.500c.3 2.600-2 4.500-4.500 4L4 13c-1.500.8-3.300-.7-2.500-2z" fill="#fff" stroke="#000" />
          </svg>
        </button>
        <button aria-label="Alerte" className="ml-[11px]">
          <svg viewBox="0 0 14 14" className="block size-[14px]">
            <path d="M7 1 13 12.500H1z" fill="#ffc62e" stroke="#c98a10" strokeLinejoin="round" />
            <path d="M7 4.500v4M7 9.800v1.400" stroke="#222" strokeWidth="1.500" />
          </svg>
        </button>
        <div className="ml-auto flex items-center gap-2 pr-[7px]">
          <button aria-label="Partager">
            <svg viewBox="0 0 18 18" className="block size-[18px]" fill="none">
              <path d="m5 8 6-4M5 9l7 4" stroke="#fff" strokeWidth="2" />
              <circle cx="4" cy="8.500" r="2.500" fill="#fff" stroke="#6b88ab" />
              <circle cx="12" cy="4" r="2.500" fill="#fff" stroke="#6b88ab" />
              <circle cx="12.500" cy="13" r="2.500" fill="#fff" stroke="#6b88ab" />
              <path d="M10 14h8l-4 4z" fill="#000" />
            </svg>
          </button>
          <WindowButtons tone="blue" />
        </div>
      </header>
      <div className="flex h-9 shrink-0 items-center gap-[9px] pl-[10px]">
        <FilterSelect label="Trading" value="Tout le trading" />
        <FilterSelect label="Trades" value="Tous les trades" />
        <button className="ml-[3px] flex items-center gap-[6px]">
          <svg viewBox="0 0 20 20" className="size-5">
            <path d="M.5 3.500h19v15H.5z" fill="#fff" stroke="#8aa6b5" />
            <path d="M0 2h20v5H0z" fill="#2f93cf" />
            <path d="M5 0v4M15 0v4" stroke="#777" strokeWidth="2" />
            <path d="M3 9.500h14M3 12.500h14M3 15.500h14M4.500 8v10M8.500 8v10M12.500 8v10M16.500 8v10" stroke="#b9c9d2" />
            <path d="M5.500 11.500h3v3h-3z" fill="#fff" stroke="#f03030" />
            <path d="M12 14h8l-4 4z" fill="#000" />
          </svg>
          Semaine en cours
        </button>
      </div>
      <div className="flex min-h-0 flex-1">
        <div className="relative min-w-0 flex-1 overflow-hidden border-t border-r border-b border-[#6f9f8f]">
          <EquityPlot />
          <p className="absolute top-0 left-[3px] leading-[13px]">
            Horizontal: <b>Transactions</b>, Vertical: <b>Devise (€)</b>, Transactions: <b className="text-[#0c930c]">149</b> / <b>1</b> /{" "}
            <b className="text-[#a80010]">34</b>
          </p>
          <p className="absolute bottom-0 left-[2px] leading-[13px]">© IT-Finance.com</p>
        </div>
        <svg className="block h-full w-[50px] shrink-0 text-[11px]">
          {gainTicks.map((v) => (
            <g key={v}>
              <rect y={gainY(v) + 1} width={4} height={1} fill="#6f8896" />
              <text x={6} y={gainY(v) + 5} fontWeight={v === 500 || v === 0 ? 700 : 400} fontSize={v === 500 || v === 0 ? 12 : 11}>
                {v}
              </text>
            </g>
          ))}
        </svg>
      </div>
      <svg className="block h-[19px] w-full shrink-0 text-[11px]">
        {tradeTicks.map((n) => (
          <g key={n}>
            <rect x={gainX(n) - 1} width={1} height={4} fill="#6f8896" />
            <rect x={gainX(n + 10) - 1} width={1} height={2} fill="#6f8896" />
            <text x={gainX(n)} y={14} textAnchor="middle" fontWeight={n === 100 || n === 0 ? 700 : 400} fontSize={n === 100 || n === 0 ? 12 : 11}>
              {n}
            </text>
          </g>
        ))}
      </svg>
    </section>
  );
}

/* ------------------------------------------------------------------ */
/* Order window                                                        */
/* ------------------------------------------------------------------ */

function FlowArrow({ flip }: { flip?: boolean }) {
  return (
    <svg viewBox="0 0 12 8" className={flip ? "h-2 w-3 rotate-180" : "h-2 w-3"}>
      <path d="M0 2.500h6V0l6 4-6 4V5.500H0z" fill="url(#flow)" />
    </svg>
  );
}

function OrderWindow() {
  return (
    <section className="absolute bottom-0 left-[761px] z-10 flex h-[150px] w-[615px] flex-col border border-[#445d69] bg-[#cddbe2]">
      <div className="grid h-[101px] grid-cols-[188fr_236fr_188fr]">
        <button className="bg-[#eabbbd] pb-2 text-[42px] leading-none whitespace-nowrap">15 172,6</button>
        <div className="flex items-center justify-center border-x-2 border-[#78909d] text-[#82949d]">Pas de position</div>
        <button className="bg-[#abd1ab] pb-2 text-[42px] leading-none whitespace-nowrap">15 173,6</button>
      </div>
      <div className="flex flex-1 items-stretch border-y-2 border-[#78909d] text-[#82949d]">
        <button aria-label="Disposition" className="flex w-[25px] items-center justify-center border-r border-[#78909d]">
          <svg viewBox="0 0 20 18" className="h-[18px] w-5">
            <path d="M1.500 2.500h17v13h-17z" fill="#fff" stroke="#555" />
            <path d="M2 6h5v6H2z" fill="#ee8080" />
            <path d="M14 6h4v6h-4z" fill="#35c935" />
            <path d="M1 6h18M1 11.500h18M7.500 2v13M13.500 2v13" stroke="#555" />
            <path d="M12 12.500h8l-4 4.500z" fill="#000" />
          </svg>
        </button>
        <button className="flex-[253]">Inverser position</button>
        <button className="flex-[287] border-l border-[#78909d]">Pas d'ordres en attente</button>
        <div className="flex w-[49px] items-center justify-center gap-[6px] border-l border-[#78909d]">
          <button aria-label="Ordres sur graphique">
            <svg viewBox="0 0 18 17" className="block h-[17px] w-[18px]">
              <path d="M.5.5h17v16H.5z" fill="#f4f8f4" stroke="#8aa" />
              <path d="M1 4h16" stroke="#8ee68e" strokeWidth="2" />
              <path d="M1 13h16" stroke="#f5a0a0" strokeWidth="2" />
              <path d="m3 8 6 5" stroke="#d22" fill="none" strokeWidth="1.500" />
              <path d="m9 13 6-9" stroke="#1aa51a" fill="none" strokeWidth="1.500" />
              <circle cx="3.500" cy="8" r="1.500" fill="#fff" stroke="#1aa51a" />
              <circle cx="9" cy="13" r="1.500" fill="#fff" stroke="#d22" />
              <circle cx="14.500" cy="4" r="1.500" fill="#fff" stroke="#1aa51a" />
            </svg>
          </button>
          <button aria-label="Réglages des ordres">
            <svg viewBox="0 0 16 17" className="block h-[17px] w-4">
              <path d="M1 1h9v4H1zM1 7h6v4H1zM1 13h8v3H1z" fill="#35c935" stroke="#0a6a0a" />
              <path d="M10 1h4v4h-4zM9 6h6v4H9zM10 12h4v4h-4z" fill="#e04545" stroke="#8a1010" />
              <path d="m3 14 5-6c0-3 2-4 4-4l-1.500 2.500 2 1.500L15 6c0 3-2 4-4.500 4L5 15.500z" fill="#fff" stroke="#000" strokeWidth=".8" />
            </svg>
          </button>
        </div>
      </div>
      <div className="flex h-[17px] items-center bg-linear-to-b from-[#a3c1ce] to-[#c3e3f0]">
        <div className="flex w-[218px] items-center gap-[2px] pl-[86px]">
          Offre <FlowArrow /> <b>0</b>
        </div>
        <div className="flex items-center gap-px">
          <b>0</b> <FlowArrow flip /> Demande
        </div>
        <p className="ml-auto pr-[88px]">
          Spread: <span className="ml-[2px]">1,0</span>
        </p>
      </div>
    </section>
  );
}

/* ------------------------------------------------------------------ */
/* Main bars                                                           */
/* ------------------------------------------------------------------ */

function MenuBar() {
  return (
    <header className="flex h-[26px] shrink-0 items-stretch border-y border-r border-[#445d69] bg-linear-to-b from-[#b8d6e3] to-[#9cb9c6] whitespace-nowrap">
      <div className="flex w-[103px] items-center gap-1 bg-linear-to-b from-[#2c383d] to-[#48555b] pl-[5px]">
        <DemoLogo />
        <div className="leading-[9px]">
          <h1 className="font-bold text-[#93e02c]">ProRealTime</h1>
          <p className="text-white">Demo</p>
        </div>
      </div>
      <nav className="flex items-center gap-3 pr-[7px] pl-[6px]">
        <button>Fichier</button>
        <button>Affichage</button>
        <button>Trading</button>
        <button>Objets</button>
        <button>Réglages</button>
        <button>Aide</button>
      </nav>
      <button aria-label="Lier" className="flex w-[18px] items-center justify-center border-l border-[#78909d]">
        <LinkIcon />
      </button>
      <div className="relative flex">
        <input aria-label="Recherche" placeholder="Recherche ..." className="w-[199px] bg-white pl-[5px] outline-none placeholder:text-[#9b9b9b] placeholder:italic" />
        <svg viewBox="0 0 16 16" className="absolute top-1 right-[2px] size-4" fill="none">
          <circle cx="9.500" cy="6" r="4.500" stroke="#444" />
          <path d="m6.500 9.500-5 5" stroke="#333" strokeWidth="1.800" />
        </svg>
      </div>
      <div className="ml-auto flex items-stretch">
        <button aria-label="Dessin" className="flex w-[25px] items-center justify-center border-x border-[#78909d] bg-[#8fa6b2]">
          <svg viewBox="0 0 20 20" className="size-5" fill="none">
            <path d="M4 15V7l3 8V5l3 9V9" stroke="#3d4d55" />
            <path d="M1 18.500h10" stroke="#10c010" strokeWidth="1.500" />
            <path d="m1 2 10 11" stroke="#e02020" strokeWidth="1.500" />
            <path d="m15 2 4 1.500-5 11-3.500 2.500-.5-4z" fill="#ffc62e" stroke="#a87a10" />
            <path d="m15 2 4 1.500-1 2-3.800-1.600z" fill="#f08a8a" />
          </svg>
        </button>
        <button aria-label="Drapeau" className="flex w-[25px] items-center justify-center border-r border-[#78909d]">
          <svg viewBox="0 0 16 18" className="h-[18px] w-4">
            <path d="M1.500 1v16" stroke="#eee" strokeWidth="2" />
            <path d="M2 2c4-2 6 2 13 0v8c-6 3-8-1-13 1z" fill="#ffc31f" stroke="#d99a10" strokeWidth=".8" />
          </svg>
        </button>
        <button className="px-[5px]">RAZER 2</button>
        <button className="flex items-center gap-1 border-l border-[#78909d] pr-[3px] pl-1">
          <svg viewBox="0 0 10 17" className="h-[17px] w-[10px]">
            <path d="M.5.5h9v16h-9zM0 6h10M0 11h10" fill="#4fd65b" stroke="#3b64b0" />
          </svg>
          Push+
        </button>
        <button className="flex items-center gap-1 border-l border-[#78909d] pr-px pl-1">
          <i className="size-[10px] border border-[#4c74a8] bg-[#8fe98f]" />
          DealThru
        </button>
        <div className="flex items-center gap-[6px] border-l border-[#78909d] pr-[5px] pl-1 text-[#78909d]">
          <button aria-label="Outils">
            <svg viewBox="0 0 12 12" className="block size-3" fill="none" stroke="currentColor">
              <path d="M.5.5h11v11H.5z" strokeDasharray="2 1" />
              <path d="m3 9 4-4M6.500 3l1 2 2-.5" strokeWidth="2" />
            </svg>
          </button>
          <button aria-label="Épingler">
            <svg viewBox="0 0 11 10" className="block h-[10px] w-[11px]" fill="currentColor">
              <path d="M0 4h4v2H0zM3 1h2v8H3zM4.500 3H9v4H4.500zM8.500 1h2v8h-2z" />
            </svg>
          </button>
          <button aria-label="Réduire">
            <svg viewBox="0 0 10 12" className="block h-3 w-[10px]"><path d="M0 10.500h10" stroke="currentColor" strokeWidth="2" /></svg>
          </button>
          <button aria-label="Fermer">
            <svg viewBox="0 0 11 11" className="block size-[11px]"><path d="m.5.5 10 10m0-10-10 10" stroke="currentColor" strokeWidth="2" /></svg>
          </button>
        </div>
      </div>
    </header>
  );
}

const at = (ys: number[], first: number, step: number, bold: number[] = []): Tick[] =>
  ys.map((y, i) => {
    const value = first + i * step;
    return { at: y, label: `15 ${value}`, bold: bold.includes(value) };
  });

const grid1 = [93, 119, 146, 173, 199, 226, 252, 279, 305];
const grid1b = [363, 390, 418, 446, 473, 501, 528, 556];
const grid2 = [91, 116, 141, 166, 191, 216, 242, 267, 292, 317];
const grid2b = [342, 366, 391, 415, 440, 465, 489, 514, 538, 563];
const grid3 = [666, 712, 758];
const grid3b = [828, 849, 870, 891, 912, 934, 955, 976, 997];
const grid4 = [637, 662, 688, 713, 738, 764, 789];
const grid4b = [850, 874, 898, 922, 946, 970, 994];

export default function App() {
  return (
    <div className="relative flex h-screen w-full flex-col overflow-hidden bg-[#9bb8c5] font-['Liberation_Sans',Arial,sans-serif] text-[11px] leading-[14px] text-black">
      <svg className="absolute size-0" aria-hidden="true">
        <defs>
          <linearGradient id="rise"><stop stopColor="#6fe66f" /><stop offset="1" stopColor="#3dbf3d" /></linearGradient>
          <linearGradient id="fall"><stop stopColor="#f58a8a" /><stop offset="1" stopColor="#cf5a5a" /></linearGradient>
          <linearGradient id="quote" x2="0" y2="1"><stop stopColor="#fff" /><stop offset="1" stopColor="#ccd6ee" /></linearGradient>
          <linearGradient id="gain" x2="0" y2="1"><stop stopColor="#d0f4d0" /><stop offset="1" stopColor="#b4dfcf" /></linearGradient>
          <linearGradient id="flow"><stop stopColor="#2f7fd0" stopOpacity=".2" /><stop offset=".6" stopColor="#2f7fd0" /></linearGradient>
        </defs>
      </svg>
      <MenuBar />
      <div className="flex h-8 shrink-0 items-center border-r border-b-2 border-[#445d69] pl-[3px]">
        {tools.map((t) => (
          <ToolButton key={t} name={t} />
        ))}
        {moreTools.map((t) => (
          <ToolButton key={t} name={t} />
        ))}
      </div>
      <main className="grid min-h-0 flex-1 grid-cols-[959fr_961fr] grid-rows-[550fr_432fr]">
        <ChartWindow
          period="100 ticks"
          narrow
          legend
          frame="border-r-2 border-b-2"
          split="grid-rows-[1fr_1fr]"
          upper={{
            ox: 28,
            oy: 83,
            grid: grid1,
            strong: [146, 279],
            levels: [{ y: 155, kind: "dash" }, { y: 165 }, { y: 178, kind: "green" }, { y: 179 }],
            series: [{ start: 32.4, step: 5.306, half: 2, bars: tickUpper }],
          }}
          lower={{ ox: 28, oy: 336, grid: grid1b, strong: [473], levels: [{ y: 355 }, { y: 369 }], series: [{ start: 32.4, step: 5.306, half: 2, bars: tickLower }] }}
          upperTicks={at([93, 119], 220, -10)}
          lowerTicks={[]}
          times={[
            { at: 79, label: "20:16" },
            { at: 148, label: "20:18" },
            { at: 212, label: "20:20" },
            { at: 281, label: "20:22" },
            { at: 361, label: "20:24" },
          ]}
        />
        <ChartWindow
          period="1 minute"
          legend
          frame="border-r border-b-2"
          split="grid-rows-[1fr_1fr]"
          upper={{
            ox: 990,
            oy: 83,
            grid: grid2,
            strong: [166, 292],
            noteX: 1863,
            levels: [{ y: 175, kind: "dash" }, { y: 184 }, { y: 196, kind: "green" }, { y: 197 }],
            notes: [
              { text: "mS1 J", y: 172, green: true },
              { text: "15 192,7", y: 180 },
              { text: "15 187,6", y: 193 },
              { text: "S1 S", y: 193, green: true },
            ],
            quote: { x: 1658, green: 232, red: 234 },
            series: [{ start: 1363.3, step: 10.18, half: 4, bars: minuteUpper }],
          }}
          lower={{
            ox: 990,
            oy: 336,
            grid: grid2b,
            strong: [514],
            noteX: 1863,
            levels: [{ y: 363 }, { y: 410 }, { y: 464 }, { y: 523 }, { y: 529 }],
            notes: [
              { text: "15 322,4", y: 359 },
              { text: "15 284,4", y: 406 },
              { text: "15 240,7", y: 460 },
              { text: "15 192,7", y: 519 },
              { text: "15 187,6", y: 525 },
            ],
            series: [{ start: 1404.1, step: 10.18, half: 4, bars: minuteLower }],
          }}
          upperTicks={at(grid2, 230, -10, [200, 150])}
          lowerTicks={at(grid2b, 340, -20, [300, 200])}
          upperTags={[
            { y: 224, text: "15 172,9", kind: "price", width: 45 },
            { y: 239, text: "46s", kind: "timer", width: 21 },
          ]}
          lowerTags={[{ y: 539, text: "46s", kind: "timer", width: 21 }]}
          times={["20:12", "20:16", "", "", "20:28", "20:32", "20:36", "20:40", "20:44", "20:48", "20:52"].map((label, i) => ({
            at: Math.round(1434 + i * 40.75),
            label,
          }))}
          corner
          cursor="mer. 19 janv. 2022 20:21"
        />
        <ChartWindow
          period="2 minutes"
          legend
          frame="border-r-2 border-b border-l"
          split="grid-rows-[193fr_194fr]"
          upper={{
            ox: 32,
            oy: 633,
            grid: grid3,
            levels: [{ y: 675, from: 56, down: 15 }, { y: 719, from: 36, up: 10 }, { y: 723, kind: "thick" }, { y: 724, from: 156, down: 18 }],
            series: [{ start: 36.4, step: 6.667, half: 2, bars: twoMinUpper }],
          }}
          lower={{
            ox: 32,
            oy: 827,
            grid: grid3b,
            strong: [912],
            levels: [{ y: 869, from: 56, down: 10 }, { y: 920, from: 36, up: 18 }, { y: 926, from: 156, down: 20 }],
            series: [
              { start: 36.4, step: 6.667, half: 2, bars: twoMinLower },
              { start: 675.4, step: 6.65, half: 2, bars: twoMinTail },
            ],
          }}
          upperTicks={[]}
          lowerTicks={[]}
          times={[
            { at: 56, label: "17:00" },
            { at: 256, label: "18:00" },
            { at: 456, label: "19:00" },
            { at: 656, label: "20:00" },
          ]}
        />
        <ChartWindow
          period="15 minutes"
          frame="border-r border-b"
          split="grid-rows-[193fr_194fr]"
          upper={{
            ox: 990,
            oy: 633,
            grid: grid4,
            noteX: 1863,
            levels: [{ y: 648 }, { y: 664, kind: "dash" }, { y: 693, kind: "dash" }, { y: 769, kind: "thick" }],
            notes: [
              { text: "15 427,9", y: 644 },
              { text: "mS1 S", y: 661, green: true },
              { text: "mS2 M", y: 690, green: true },
              { text: "S1 S", y: 767, green: true },
            ],
            quote: { x: 1717, green: 777, red: 778 },
            series: [{ start: 1405.4, step: 12, half: 4, bars: quarterUpper }],
          }}
          lower={{
            ox: 990,
            oy: 827,
            grid: grid4b,
            noteX: 1863,
            levels: [{ y: 836 }],
            notes: [{ text: "15 427,9", y: 832 }],
            series: [{ start: 1381.4, step: 12, half: 4, bars: quarterLower }],
          }}
          upperTicks={at(grid4, 450, -50)}
          lowerTicks={at(grid4b, 400, -50)}
          upperTags={[
            { y: 763, text: "15 172,9", kind: "price", width: 45 },
            { y: 778, text: "10m46s", kind: "timer", width: 41 },
          ]}
          lowerTags={[{ y: 951, text: "10m46s", kind: "timer", width: 41 }]}
          times={[14, 15, 16, 17, 18, 19, 20, 21, 22, 23].map((h, i) => ({ at: 1405 + i * 48, label: `${h}:00` }))}
          corner
        />
      </main>
      <OrderWindow />
      <PerformanceWindow />
    </div>
  );
}
